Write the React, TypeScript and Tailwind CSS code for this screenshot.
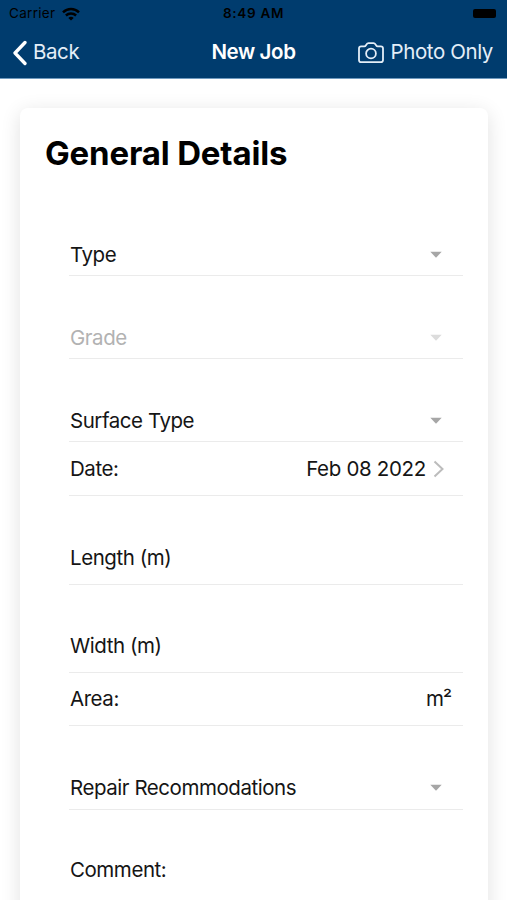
import React from 'react'
import clsx from 'clsx'

interface Field {
  label: string
  kind: 'select' | 'date' | 'input' | 'area'
  rowClass: string
  disabled?: boolean
  value?: string
}

const fields: Field[] = [
  { label: 'Type', kind: 'select', rowClass: 'h-[83px] pb-[5px]' },
  { label: 'Grade', kind: 'select', rowClass: 'h-[83px] pb-[5px]', disabled: true },
  { label: 'Surface Type', kind: 'select', rowClass: 'h-[83px] pb-[5px]' },
  { label: 'Date:', kind: 'date', rowClass: 'h-[54px] pb-[11px]', value: 'Feb 08 2022' },
  { label: 'Length (m)', kind: 'input', rowClass: 'h-[89px] pb-[11px]' },
  { label: 'Width (m)', kind: 'input', rowClass: 'h-[88px] pb-[11px]' },
  { label: 'Area:', kind: 'area', rowClass: 'h-[53px] pb-[11px]', value: 'm²' },
  { label: 'Repair Recommodations', kind: 'select', rowClass: 'h-[84px] pb-[6px]' },
]

function WifiIcon() {
  return (
    <svg className="ml-[7px] h-[14px] w-[18px]" viewBox="0 0 18 14" fill="none" stroke="currentColor" strokeWidth="2.5">
      <path d="M1 5.3C5.6.9 12.4.9 17 5.3" />
      <path d="M3.9 8.5c2.900-2.700 7.300-2.700 10.200 0" />
      <path d="M9 13.6 6.300 10.900c1.500-1.400 3.900-1.400 5.400 0z" fill="currentColor" stroke="none" />
    </svg>
  )
}

function CameraIcon() {
  return (
    <svg className="h-[22px] w-[26px]" viewBox="0 0 26 22" fill="none" stroke="currentColor" strokeWidth="1.8" strokeLinejoin="round">
      <path d="M3.200 4.300h3.100c.7 0 1.100-.2 1.500-.8l.8-1.200c.5-.8 1-1.100 1.900-1.100h5c.9 0 1.400.3 1.900 1.100l.8 1.200c.4.6.8.8 1.500.8h3.100c1.300 0 2.200.9 2.200 2.200v11.500c0 1.300-.9 2.200-2.200 2.200H3.200C1.900 20.200 1 19.300 1 18V6.500c0-1.300.9-2.200 2.200-2.200z" />
      <circle cx="13" cy="11.500" r="4.900" />
    </svg>
  )
}

function Header() {
  return (
    <header className="h-[79px] border-b border-[#6f9abf] bg-[#003c6e]">
      <div className="grid h-[27px] grid-cols-3 items-center px-[9px] text-[13.500px] text-black">
        <div className="flex items-center">
          <span className="tracking-[0.3px]">Carrier</span>
          <WifiIcon />
        </div>
        <span className="text-center font-semibold tracking-[0.7px]">8:49 AM</span>
        <div className="mr-[2px] h-[9px] w-[23px] justify-self-end rounded-[2px] bg-black" />
      </div>
      <div className="grid h-[51px] grid-cols-[1fr_auto_1fr] items-center pr-[14px] pl-[12px] text-[20.500px] tracking-[-0.4px] text-[#e4eef8]">
        <button className="flex items-center gap-[6px]">
          <svg className="h-[26px] w-[15px] text-white" viewBox="0 0 15 26" fill="none" stroke="currentColor" strokeWidth="3.300" strokeLinecap="round" strokeLinejoin="round">
            <path d="M13 2.500 3 13l10 10.500" />
          </svg>
          Back
        </button>
        <h1 className="pl-[2px] font-semibold text-white">New Job</h1>
        <button className="flex items-center gap-[7px] justify-self-end whitespace-nowrap">
          <CameraIcon />
          Photo Only
        </button>
      </div>
    </header>
  )
}

function FieldRow({ field }: { field: Field }) {
  return (
    <div className={clsx('flex items-end justify-between border-b border-[#ebebeb]', field.rowClass)}>
      <span className={clsx('pl-px', field.disabled && 'text-[#b2b2b2]')}>{field.label}</span>
      {field.kind === 'select' && (
        <svg
          className={clsx('mr-[21px] mb-[12px] h-[7px] w-[12px]', field.disabled ? 'text-[#dcdcdc]' : 'text-[#a6a6a6]')}
          viewBox="0 0 12 7"
          fill="currentColor"
        >
          <path d="M.3.800h11.400L6 6.700z" />
        </svg>
      )}
      {field.kind === 'date' && (
        <div className="mr-[19px] flex items-center gap-[7px]">
          <span className="tracking-[-0.320px]">{field.value}</span>
          <svg className="h-[18px] w-[11px] text-[#bcbcbc]" viewBox="0 0 11 18" fill="none" stroke="currentColor" strokeWidth="2">
            <path d="m1.500 1.500 8 7.500-8 7.500" />
          </svg>
        </div>
      )}
      {field.kind === 'area' && <span className="mr-[12px] tracking-[-1px]">{field.value}</span>}
    </div>
  )
}

export default function App() {
  return (
    <div className="h-[900px] overflow-hidden bg-white font-['Inter',sans-serif]">
      <Header />
      <main className="px-5 pt-[29px]">
        <section className="mr-[-1px] h-[900px] rounded-[8px] bg-white pr-[25px] pl-[25px] shadow-[0_4px_20px_rgba(0,0,0,0.12)]">
          <h2 className="h-[85px] pt-[25px] text-[33px] leading-[40px] font-bold tracking-[-0.170px] text-black">General Details</h2>
          <div className="pl-[24px] text-[20.500px] leading-[30px] tracking-[-0.450px] text-[#151515]">
            {fields.map((field) => (
              <FieldRow key={field.label} field={field} />
            ))}
            <p className="pt-[45px] pl-px">Comment:</p>
          </div>
        </section>
      </main>
    </div>
  )
}
